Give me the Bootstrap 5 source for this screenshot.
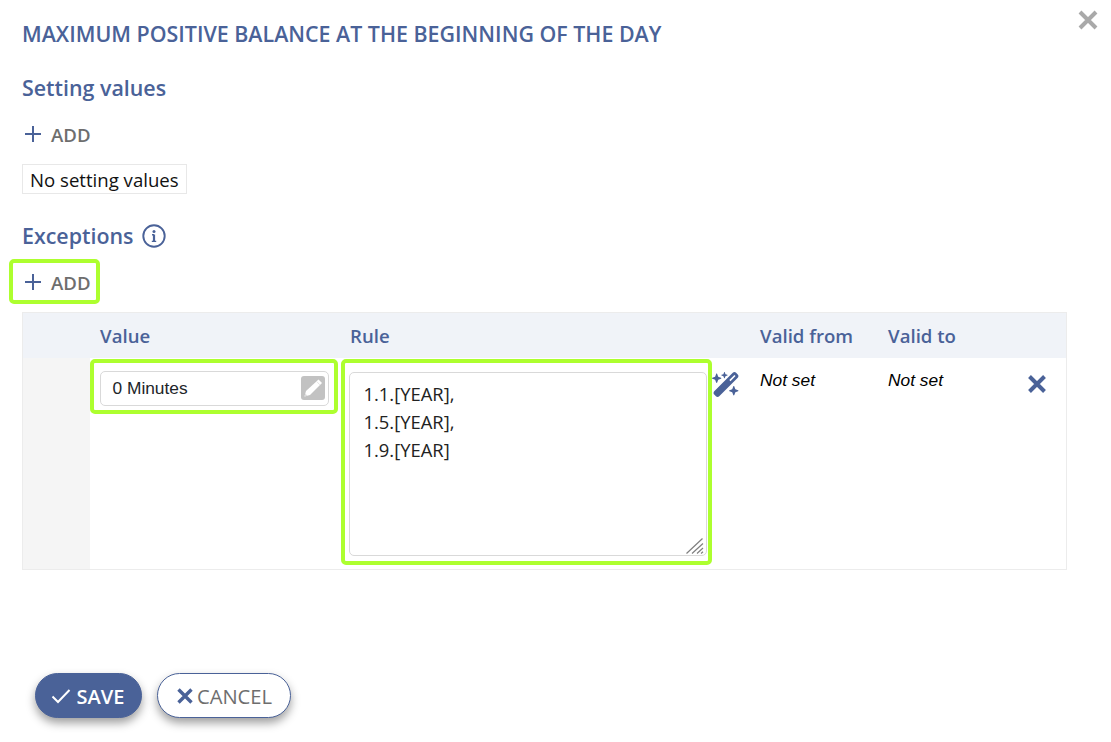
<!DOCTYPE html>
<html lang="en">
<head>
    <meta charset="UTF-8">
    <meta name="viewport" content="width=device-width, initial-scale=1.0">
    <title>Maximum positive balance</title>
    <link href="https://cdn.jsdelivr.net/npm/bootstrap@5.3.0/dist/css/bootstrap.min.css" rel="stylesheet">
    <style>
        body { font-family: "Open Sans", sans-serif; color: #000; background: #fff; }
        .dlg { position: relative; height: 742px; padding: 0 44px 0 22px; display: flex; flex-direction: column; }
        .dlg-close { position: absolute; top: 9px; right: 12px; line-height: 0; }
        .dlg-title { font-size: 21.4px; font-weight: 600; color: #4a6298; line-height: 28px; margin: 20px 0 0; }
        .sec-title { font-size: 21.4px; font-weight: 600; color: #4a6298; line-height: 28px; margin: 0; }
        .info-ic { margin-left: 1px; }
        .add-link { display: inline-flex; align-items: center; gap: 10px; font-size: 18.6px; font-weight: 550; color: #6e6e6e; line-height: 24px; padding: 0 5px 0 3px; text-decoration: none; }
        .add-link svg { margin-bottom: 2px; }
        .no-values { display: inline-block; align-self: flex-start; border: 1px solid #e8e8e8; font-size: 18.6px; line-height: 27px; padding: 1px 7px 0; margin-top: 17px; color: #111; }
        .lime { border: 4px solid #adff2f; border-radius: 5px; }
        .add-box { align-self: flex-start; flex: 0 0 45px; margin-left: -13px; margin-top: 9px; padding: 2px 0 0 9px; display: flex; align-items: center; }
        .rule-tbl { table-layout: fixed; width: 1045px; margin: 8px 0 0; border: 1px solid #ececec; }
        .rule-tbl th { background: #f0f3f8; color: #4a6298; font-size: 18.6px; font-weight: 600; height: 45px; padding: 2px 10px 0 10.6px; border: 0; vertical-align: middle; }
        .rule-tbl td { padding: 0; border: 0; height: 212px; vertical-align: top; }
        .rule-tbl td.gutter { background: #f5f5f5; }
        .val-box { margin: 1px 0 0 0; height: 55px; padding: 8px 5px 4px 6px; width: 248px; }
        .val-input { position: relative; height: 35px; border: 1px solid #d9d9d9; border-radius: 5px; font-family: "Liberation Sans", sans-serif; font-size: 17.33px; line-height: 33px; padding: 0 12px; background: #fff; }
        .val-pen { position: absolute; top: 4px; right: 3px; line-height: 0; }
        .rule-cell { display: flex; align-items: flex-start; }
        .rule-box { position: relative; margin: 1px 0 0 1px; width: 371px; height: 206px; padding: 9px 1px 5px 4px; }
        .rule-area { display: block; width: 358px; height: 184px; border: 1px solid #d9d9d9; border-radius: 5px; font-family: "Open Sans", sans-serif; font-size: 18.4px; line-height: 28px; color: #222; padding: 7px 14px; outline: 0; resize: none; }
        .rule-grip { position: absolute; right: 4px; bottom: 7px; line-height: 0; }
        .wand { margin: 14px 0 0 0; line-height: 0; }
        .rule-tbl td.not-set { font-family: "Liberation Sans", sans-serif; font-style: italic; font-size: 17.33px; line-height: 20px; padding: 12px 10px 0 10.6px; color: #000; }
        .rule-tbl td.del-x { padding: 16px 0 0 21px; line-height: 0; }
        .dlg-btns { margin-top: 103px; margin-left: 13px; display: flex; gap: 15px; }
        .btn-pill { height: 45px; border-radius: 23px; font-size: 20px; display: inline-flex; align-items: center; gap: 5px; box-shadow: 0 5px 10px rgba(0,0,0,.38); padding: 2px 0 0; justify-content: center; }
        .btn-pill svg { margin-top: -2px; }
        .btn-save { width: 107px; background: #4a6298; border: 1px solid #4a6298; color: #fff; font-weight: 600; gap: 6px; padding-right: 2px; }
        .btn-save:hover { background: #4a6298; color: #fff; }
        .btn-cancel { width: 134px; background: #fff; border: 1px solid #4a6298; color: #6e6e6e; font-size: 20.2px; gap: 4px; padding-left: 1px; }
    </style>
</head>
<body>
    <div class="dlg">
        <a class="dlg-close" href="#" aria-label="Close">
            <svg width="22" height="22" viewBox="0 0 22 22"><path d="M3 3 19 19M19 3 3 19" stroke="#a9a9a9" stroke-width="4"/></svg>
        </a>

        <h1 class="dlg-title">MAXIMUM POSITIVE BALANCE AT THE BEGINNING OF THE DAY</h1>

        <h2 class="sec-title" style="margin-top:26px">Setting values</h2>
        <div class="d-flex" style="margin-top:21px">
            <a class="add-link" href="#">
                <svg width="16" height="16" viewBox="0 0 16 16"><path d="M8 0V16M0 8H16" stroke="#4a6298" stroke-width="2"/></svg>
                ADD
            </a>
        </div>
        <div class="no-values">No setting values</div>

        <h2 class="sec-title d-flex align-items-center gap-2" style="margin-top:28px">
            Exceptions
            <svg class="info-ic" width="24" height="24" viewBox="0 0 24 24" fill="none"><circle cx="12" cy="12" r="10.7" stroke="#4a6298" stroke-width="1.9"/><circle cx="12" cy="7.4" r="1.5" fill="#4a6298"/><path d="M12 10.5V17.5" stroke="#4a6298" stroke-width="2.2"/><path d="M10 10.8H12M9.8 17.4H14.2" stroke="#4a6298" stroke-width="1.4"/></svg>
        </h2>
        <div class="add-box lime">
            <a class="add-link" href="#">
                <svg width="16" height="16" viewBox="0 0 16 16"><path d="M8 0V16M0 8H16" stroke="#4a6298" stroke-width="2"/></svg>
                ADD
            </a>
        </div>

        <table class="table rule-tbl">
            <colgroup>
                <col style="width:67px"><col style="width:250px"><col style="width:410px"><col style="width:128px"><col style="width:128px"><col>
            </colgroup>
            <thead>
                <tr><th></th><th>Value</th><th>Rule</th><th>Valid from</th><th>Valid to</th><th></th></tr>
            </thead>
            <tbody>
                <tr>
                    <td class="gutter"></td>
                    <td>
                        <div class="val-box lime">
                            <div class="val-input">0 Minutes
                                <span class="val-pen">
                                    <svg width="24" height="24" viewBox="0 0 24 24"><rect width="24" height="24" rx="3" fill="#c2c2c2"/><path d="M17.5 3.5 21 7 9 19 3.5 20.5 5 15Z" fill="#fff"/><path d="M15.8 5.6 18.8 8.8" stroke="#d8d8d8" stroke-width=".7" fill="none"/><path d="M3.5 20.5 4.3 17.6 6.4 19.7Z" fill="#dcdcdc"/></svg>
                                </span>
                            </div>
                        </div>
                    </td>
                    <td>
                        <div class="rule-cell">
                            <div class="rule-box lime">
                                <textarea class="rule-area">1.1.[YEAR],
1.5.[YEAR],
1.9.[YEAR]</textarea>
                                <span class="rule-grip">
                                    <svg width="18" height="16" viewBox="0 0 18 16" fill="none"><path d="M0.5 15.5 16.5 0.5M6 15.5 17 5.5M11 15.5 17 10M15 15.5 17 13.7" stroke="#808080" stroke-width="1.2"/></svg>
                                </span>
                            </div>
                            <div class="wand">
                                <svg width="28" height="25" viewBox="0 0 576 512" fill="#4a6298"><path d="M234.7 42.7L197 56.8c-3 1.1-5 4-5 7.2s2 6.1 5 7.2l37.7 14.1L248.8 123c1.1 3 4 5 7.2 5s6.1-2 7.2-5l14.1-37.7L315 71.2c3-1.1 5-4 5-7.2s-2-6.1-5-7.2L277.3 42.7 263.2 5c-1.1-3-4-5-7.2-5s-6.1 2-7.2 5L234.7 42.7zM46.1 395.4c-18.7 18.7-18.7 49.1 0 67.9l34.6 34.6c18.7 18.7 49.1 18.7 67.9 0L529.9 116.5c18.7-18.7 18.7-49.1 0-67.9L495.3 14.1c-18.7-18.7-49.1-18.7-67.9 0L46.1 395.4zM484.6 82.6l-105 105-23.3-23.3 105-105 23.3 23.3zM7.5 117.2C3 118.9 0 123.2 0 128s3 9.1 7.5 10.8L64 160l21.2 56.5c1.7 4.5 6 7.5 10.8 7.5s9.1-3 10.8-7.5L128 160l56.5-21.2c4.5-1.7 7.5-6 7.5-10.8s-3-9.1-7.5-10.8L128 96 106.8 39.5C105.1 35 100.8 32 96 32s-9.1 3-10.8 7.5L64 96 7.5 117.2zm352 256c-4.5 1.7-7.5 6-7.5 10.8s3 9.1 7.5 10.8L416 416l21.2 56.5c1.7 4.5 6 7.5 10.8 7.5s9.1-3 10.8-7.5L480 416l56.5-21.2c4.5-1.7 7.5-6 7.5-10.8s-3-9.1-7.5-10.8L480 352l-21.2-56.5c-1.7-4.5-6-7.5-10.8-7.5s-9.1 3-10.8 7.5L416 352l-56.5 21.2z"/></svg>
                            </div>
                        </div>
                    </td>
                    <td class="not-set">Not set</td>
                    <td class="not-set">Not set</td>
                    <td class="del-x">
                        <svg width="20" height="20" viewBox="0 0 20 20"><path d="M2.5 2.5 17.5 17.5M17.5 2.5 2.5 17.5" stroke="#4a6298" stroke-width="4"/></svg>
                    </td>
                </tr>
            </tbody>
        </table>

        <div class="dlg-btns">
            <button type="button" class="btn btn-pill btn-save">
                <svg width="20" height="16" viewBox="0 0 20 16" fill="none"><path d="M1.5 8.5 7 14 18.5 2" stroke="#fff" stroke-width="2"/></svg>
                SAVE
            </button>
            <button type="button" class="btn btn-pill btn-cancel">
                <svg width="16" height="16" viewBox="0 0 16 16" fill="none"><path d="M1.5 1.5 14.5 14.5M14.5 1.5 1.5 14.5" stroke="#4a6298" stroke-width="3.4"/></svg>
                CANCEL
            </button>
        </div>
    </div>

    <script src="https://cdn.jsdelivr.net/npm/bootstrap@5.3.0/dist/js/bootstrap.bundle.min.js"></script>
</body>
</html>
